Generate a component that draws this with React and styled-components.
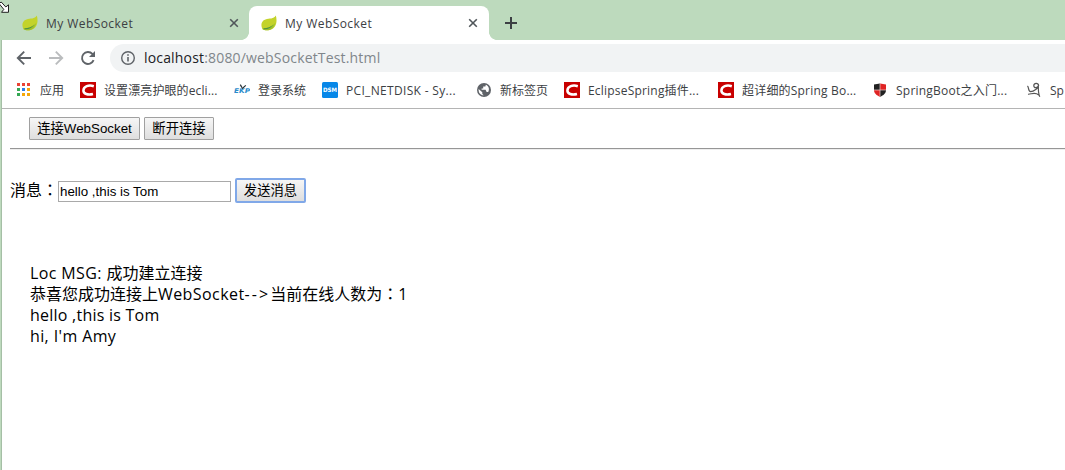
import React from 'react';
import styled, { createGlobalStyle } from 'styled-components';

const UI = '"Open Sans", "Noto Sans CJK SC", sans-serif';

const Global = createGlobalStyle`
  * { box-sizing: border-box; }
  body { margin: 0; background: #fff; overflow: hidden; }
`;

const Window = styled.div`
  position: relative;
  display: flex;
  flex-direction: column;
  width: 1065px;
  height: 470px;
  overflow: hidden;
  background: #bddabd;
  font-family: ${UI};
`;

const Cursor = styled.svg`
  position: absolute;
  left: 0;
  top: 0;
`;

const TabStrip = styled.div`
  display: flex;
  align-items: flex-end;
  height: 40px;
  padding-left: 10px;
`;

const Tab = styled.div`
  position: relative;
  display: flex;
  align-items: center;
  width: ${(p) => (p.$active ? 240 : 239)}px;
  height: 34px;
  padding: 0 ${(p) => (p.$active ? 11 : 10)}px 0 12px;
  border-radius: 8px 8px 0 0;
  background: ${(p) => (p.$active ? '#fff' : 'transparent')};
  color: #3c4043;
  &::before,
  &::after {
    content: '';
    display: ${(p) => (p.$active ? 'block' : 'none')};
    position: absolute;
    bottom: 0;
    width: 8px;
    height: 8px;
  }
  &::before {
    left: -8px;
    background: radial-gradient(circle at 0 0, transparent 7.6px, #fff 8.2px);
  }
  &::after {
    right: -8px;
    background: radial-gradient(circle at 100% 0, transparent 7.6px, #fff 8.2px);
  }
`;

const TabTitle = styled.span`
  flex: 1;
  margin-left: 8px;
  padding-top: 2px;
  font-size: 12px;
  line-height: 16px;
  letter-spacing: 0.43px;
  white-space: nowrap;
`;

const NewTab = styled.div`
  display: flex;
  align-items: center;
  height: 34px;
  margin-left: 16px;
`;

const Body = styled.div`
  display: flex;
  flex-direction: column;
  flex: 1;
  margin-left: 1px;
  border-left: 1px solid #a5bfa6;
  background: #fff;
`;

const Toolbar = styled.div`
  display: flex;
  align-items: center;
  height: 36px;
  padding-left: 12px;
`;

const NavIcons = styled.div`
  display: flex;
  gap: 12px;
  width: 96px;
`;

const Omnibox = styled.div`
  display: flex;
  align-items: center;
  flex: 1;
  height: 28px;
  padding-left: 10px;
  border-radius: 14px 0 0 14px;
  background: #f1f3f4;
`;

const Url = styled.span`
  margin-left: 8px;
  font-size: 14px;
  line-height: 20px;
  letter-spacing: 0.17px;
  color: #80868b;
  white-space: nowrap;
  b { font-weight: 400; color: #202124; }
`;

const Bookmarks = styled.div`
  display: flex;
  align-items: center;
  gap: 16px;
  height: 33px;
  padding: 0 0 4px 14px;
  border-bottom: 1px solid #b4b4b4;
  overflow: hidden;
`;

const Bookmark = styled.div`
  display: flex;
  flex: none;
  align-items: center;
  gap: 8px;
  svg { flex: none; }
`;

const BookmarkLabel = styled.span`
  width: ${(p) => p.$width}px;
  padding-top: 2px;
  font-size: 12px;
  line-height: 18px;
  letter-spacing: ${(p) => p.$spacing || 0}px;
  color: #3c4043;
  white-space: nowrap;
`;

const Page = styled.main`
  padding: 8px 0 0 8px;
  color: #000;
  font-size: 16px;
`;

const ConnectRow = styled.div`
  display: flex;
  gap: 4px;
  padding-left: 19px;
`;

const Button = styled.button`
  width: ${(p) => p.$width}px;
  height: ${(p) => (p.$focused ? 25 : 23)}px;
  padding: 1px 0 0;
  border: ${(p) => (p.$focused ? '2px solid #80a8e8' : '1px solid #a0a0a0')};
  border-radius: ${(p) => (p.$focused ? 2 : 1)}px;
  background: linear-gradient(#f6f6f6, #dedede);
  font-family: "Liberation Sans", "Noto Sans CJK SC", sans-serif;
  font-size: 13.33px;
  line-height: 20px;
  color: #000;
  white-space: nowrap;
`;

const Rule = styled.hr`
  height: 2px;
  margin: 8px 0 28px;
  border: 0;
  border-top: 1px solid #969696;
  border-bottom: 1px solid #eee;
`;

const MessageRow = styled.div`
  display: flex;
  align-items: center;
  height: 25px;
`;

const MessageLabel = styled.label`
  width: 48px;
  height: 24px;
  line-height: 22px;
  white-space: nowrap;
`;

const Colon = styled.span`
  font-family: "Noto Sans CJK TC", sans-serif;
  line-height: 1;
`;

const MessageInput = styled.input`
  width: 173px;
  height: 21px;
  margin: 1px 4px 0 0;
  padding: 0 1px;
  border: 1px solid #a9a9a9;
  font-family: "Liberation Sans", sans-serif;
  font-size: 13.33px;
  color: #000;
`;

const Log = styled.div`
  padding: 60px 0 0 20px;
`;

const LogLine = styled.div`
  height: 21px;
  line-height: 21px;
  white-space: nowrap;
`;

const Run = styled.span`
  letter-spacing: ${(p) => p.$spacing}px;
`;

const Leaf = () => (
  <svg width="16" height="16" viewBox="0 0 16 16">
    <path d="M14.8 0.6C16.6 6 15.4 14.6 7.5 15.2C4.5 15.4 2.3 14.9 1.4 14C-0.5 10.5 0.2 5.5 4.5 4.4C8.5 3.4 12.6 4.2 14.8 0.6Z" fill="#c3d32a" />
    <path d="M1.6 13.6C7 13.4 11.4 11.8 14.3 7.8C13.4 11.8 11 15 7 15.2C4.6 15.3 2.6 15 1.6 14.2Z" fill="#9cc02c" />
    <path d="M2.2 13.2C6.6 13.2 10 12 12.6 9.2C10.6 12.4 7 14.4 3 14.2Z" fill="#4f9440" />
  </svg>
);

const Close = () => (
  <svg width="10" height="10" viewBox="0 0 10 10">
    <path d="M1.2 1.2L8.8 8.8M8.8 1.2L1.2 8.8" stroke="#50565a" strokeWidth="1.6" />
  </svg>
);

const Arrow = ({ color, flip }) => (
  <svg width="20" height="20" viewBox="0 0 20 20">
    <path
      d="M17 10H4M10.2 3.6L3.8 10L10.2 16.4"
      transform={flip ? 'translate(20 0) scale(-1 1)' : undefined}
      fill="none"
      stroke={color}
      strokeWidth="1.9"
    />
  </svg>
);

const Reload = () => (
  <svg width="20" height="20" viewBox="0 0 20 20">
    <path d="M15.6 12.2A6 6 0 1 1 14.4 5.9L16 7.5" fill="none" stroke="#5f6368" strokeWidth="1.9" />
    <path d="M17 3V9H11Z" fill="#5f6368" />
  </svg>
);

const Info = () => (
  <svg width="16" height="16" viewBox="0 0 16 16">
    <circle cx="8" cy="8" r="6.3" fill="none" stroke="#5f6368" strokeWidth="1.4" />
    <path d="M8 7V11.6M8 4.3V5.8" stroke="#5f6368" strokeWidth="1.6" />
  </svg>
);

const appColors = ['#ea4335', '#ea4335', '#ea4335', '#34a853', '#2b7de9', '#f5a70a', '#34a853', '#f5a70a', '#f5a70a'];
const Apps = () => (
  <svg width="16" height="16" viewBox="0 0 16 16">
    {appColors.map((c, i) => (
      <rect key={i} x={1 + (i % 3) * 5} y={1 + Math.floor(i / 3) * 5} width="3" height="3" fill={c} />
    ))}
  </svg>
);

const RedC = () => (
  <svg width="16" height="16" viewBox="0 0 16 16">
    <rect width="16" height="16" fill="#c80000" />
    <path d="M13.8 4.2C8.5 2.6 3.7 4.4 3.4 8.3C3.2 12 8 13.3 13 12" fill="none" stroke="#fff" strokeWidth="2.5" />
  </svg>
);

const LogoText = styled.text`
  font-family: "DejaVu Sans", sans-serif;
  font-weight: 700;
`;

const Ekp = () => (
  <svg width="16" height="16" viewBox="0 0 16 16">
    <LogoText x="0" y="11" fontSize="6.4" fontStyle="italic" fill="#2b8ccb" textLength="16" lengthAdjust="spacingAndGlyphs">EKP</LogoText>
    <path d="M6.3 2.6L8 5.6M11.8 3.4L8 6.8" fill="none" stroke="#263238" strokeWidth="1.2" />
  </svg>
);

const Dsm = () => (
  <svg width="16" height="16" viewBox="0 0 16 16">
    <rect width="16" height="16" rx="1.5" fill="#0787e8" />
    <LogoText x="1" y="10" fontSize="6" fill="#fff" textLength="14" lengthAdjust="spacingAndGlyphs">DSM</LogoText>
  </svg>
);

const Globe = () => (
  <svg width="16" height="16" viewBox="0 0 16 16">
    <circle cx="8" cy="8" r="7" fill="#5f6368" />
    <path d="M2.6 7L6.3 10.2V12L7.7 13.3C4.5 13.2 2.3 10.8 2.6 7ZM9.8 2.8L9.4 4.6H7.2V6.4H5.6V7.8H9.6L10.6 10H12.2C13.8 7.2 12.7 4 9.8 2.8Z" fill="#fff" />
  </svg>
);

const Shield = () => (
  <svg width="16" height="16" viewBox="0 0 16 16">
    <path d="M2 2.5L8 1.5V8H2Z" fill="#222" />
    <path d="M8 1.5L14 2.5V8H8Z" fill="#e02424" />
    <path d="M2 8H8V15C4.5 13.2 2 11.4 2 8Z" fill="#e02424" />
    <path d="M8 8H14C14 11.4 11.5 13.2 8 15Z" fill="#222" />
    <path d="M8 1.5V15M2 8H14" stroke="#e9d0d0" strokeWidth=".7" />
  </svg>
);

const Scribble = () => (
  <svg width="16" height="16" viewBox="0 0 16 16" fill="none" stroke="#555" strokeWidth="1.2">
    <path d="M1.4 4C3.2 5 1.8 9.6 4.6 9.7C7.6 9.6 12.6 6.2 12.6 3.4C12.4 0.6 8 0.6 7.8 3.4C7.8 6.4 11.6 6.4 12.4 3.8C12.2 8 12.4 12 13.8 14.8M2 12.2C5 12.6 8.6 9.4 12.8 13" />
  </svg>
);

const bookmarks = [
  { icon: Apps, label: '应用', width: 24 },
  { icon: RedC, label: '设置漂亮护眼的ecli...', width: 114, spacing: 0.1 },
  { icon: Ekp, label: '登录系统', width: 48 },
  { icon: Dsm, label: 'PCI_NETDISK - Sy...', width: 114, spacing: 0.32 },
  { icon: Globe, label: '新标签页', width: 48 },
  { icon: RedC, label: 'EclipseSpring插件...', width: 114, spacing: 0.2 },
  { icon: RedC, label: '超详细的Spring Bo...', width: 114, spacing: 0.2 },
  { icon: Shield, label: 'SpringBoot之入门...', width: 114, spacing: 0.23 },
  { icon: Scribble, label: 'Sp', width: 15 },
];

const log = [
  [['Loc MSG: ', 0.38], ['成功建立连接', 0]],
  [['恭喜您成功连接上', 0], ['WebSocket', 0.42], ['-->', 2.1], ['当前在线人数为', 0], ['：'], ['1', 0]],
  [['hello ,this is Tom', 0.24]],
  [["hi, I'm Amy", 0.38]],
];

export default function App() {
  return (
    <Window>
      <Global />
      <TabStrip>
        {[false, true].map((active) => (
          <Tab key={String(active)} $active={active}>
            <Leaf />
            <TabTitle>My WebSocket</TabTitle>
            <Close />
          </Tab>
        ))}
        <NewTab>
          <svg width="12" height="12" viewBox="0 0 12 12">
            <path d="M6 0V12M0 6H12" stroke="#3c4043" strokeWidth="2" />
          </svg>
        </NewTab>
      </TabStrip>
      <Body>
        <Toolbar>
          <NavIcons>
            <Arrow color="#5f6368" />
            <Arrow color="#babcbe" flip />
            <Reload />
          </NavIcons>
          <Omnibox>
            <Info />
            <Url><b>localhost</b>:8080/webSocketTest.html</Url>
          </Omnibox>
        </Toolbar>
        <Bookmarks>
          {bookmarks.map(({ icon: Icon, label, width, spacing }) => (
            <Bookmark key={label}>
              <Icon />
              <BookmarkLabel $width={width} $spacing={spacing}>{label}</BookmarkLabel>
            </Bookmark>
          ))}
        </Bookmarks>
        <Page>
          <ConnectRow>
            <Button $width={111}>连接WebSocket</Button>
            <Button $width={70}>断开连接</Button>
          </ConnectRow>
          <Rule />
          <MessageRow>
            <MessageLabel>消息<Colon>：</Colon></MessageLabel>
            <MessageInput defaultValue="hello ,this is Tom" />
            <Button $width={71} $focused>发送消息</Button>
          </MessageRow>
          <Log>
            {log.map((runs, i) => (
              <LogLine key={i}>
                {runs.map(([text, spacing]) =>
                  text === '：' ? <Colon key={text}>{text}</Colon> : <Run key={text} $spacing={spacing}>{text}</Run>
                )}
              </LogLine>
            ))}
          </Log>
        </Page>
      </Body>
      <Cursor width="10" height="14" viewBox="0 0 10 14">
        <path d="M-1 3.5L1.2 2L5.8 7L8.5 4.8V12.3H1.5L3.8 9.4Z" fill="#fff" stroke="#222" strokeWidth="1" />
      </Cursor>
    </Window>
  );
}
